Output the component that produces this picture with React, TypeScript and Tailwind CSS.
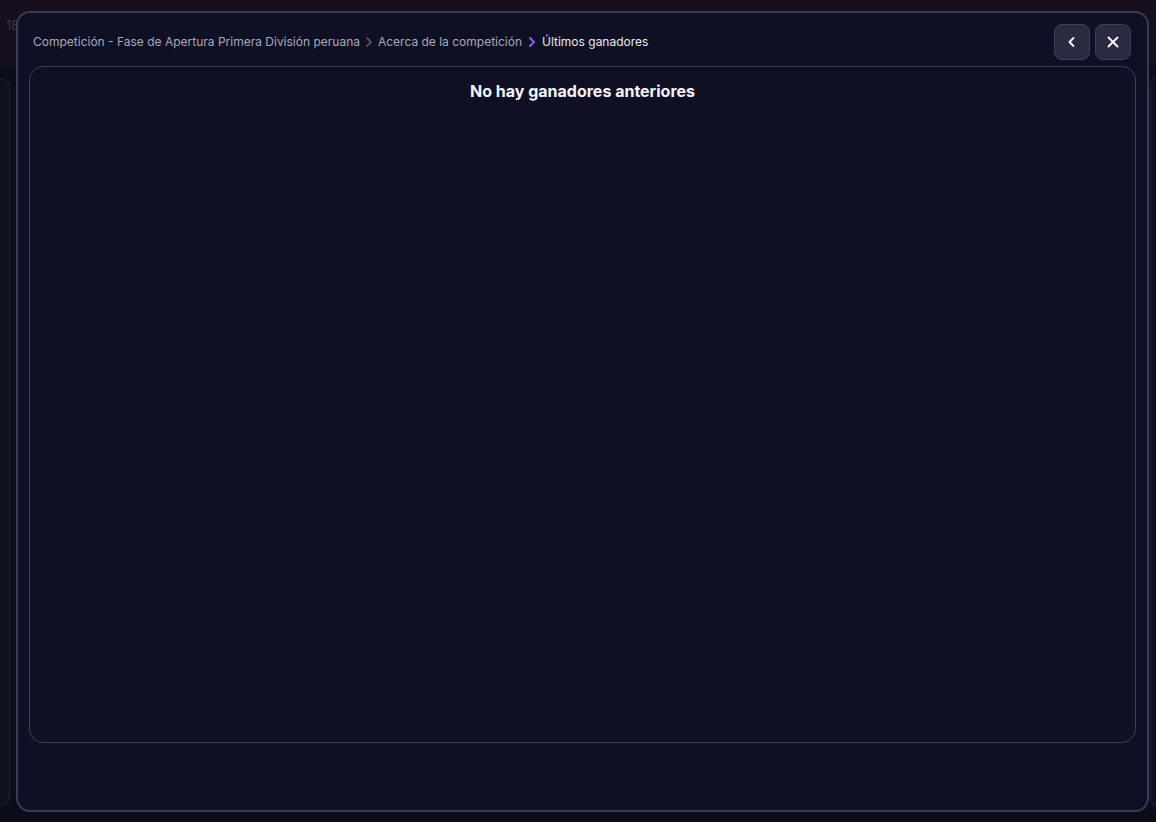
import React from "react";

export default function App() {
  return (
    <div
      className="relative w-[1156px] h-[822px] overflow-hidden bg-[#0b0e1a]"
      style={{ fontFamily: "Inter, 'Noto Sans', sans-serif" }}
    >
      {/* dimmed page behind */}
      <div className="flex flex-col w-full h-full">
        <div className="h-[66px] bg-[#170f1d] flex items-center pl-[6px] text-[13px] text-[#3a3548]">
          <span className="mt-[-14px]">18</span>
        </div>
        <div className="flex flex-1 gap-[8px] pt-[12px] pb-[16px]">
          <div className="w-[10px] rounded-r-[10px] border border-l-0 border-[#1f2233] bg-[#0d1020]" />
          <div className="flex-1" />
          <div className="w-[6px] rounded-l-[6px] border border-r-0 border-[#1f2233] bg-[#0d1020]" />
        </div>
      </div>

      {/* modal */}
      <div className="absolute left-[16px] top-[11px] w-[1133px] h-[801px] rounded-[14px] border-2 border-[#3a3b52] bg-[#0f1024] flex flex-col px-[11px] pt-[11px]">
        <div className="flex items-center justify-between h-[36px]">
          <div className="flex items-center text-[12px] pl-[4px] mt-[-1px]">
            <span className="text-[#a8a9b8]">Competición - Fase de Apertura Primera División peruana</span>
            <svg className="mx-[4px]" width="10" height="12" viewBox="0 0 10 12" fill="none">
              <path d="M3 2l4 4-4 4" stroke="#6b6c80" strokeWidth="1.4" strokeLinecap="round" strokeLinejoin="round" />
            </svg>
            <span className="text-[#a8a9b8]">Acerca de la competición</span>
            <svg className="mx-[4px]" width="12" height="12" viewBox="0 0 12 12" fill="none">
              <path d="M4 2l4 4-4 4" stroke="#8b5cf6" strokeWidth="2" strokeLinecap="round" strokeLinejoin="round" />
            </svg>
            <span className="text-[#e8e8f0]">Últimos ganadores</span>
          </div>
          <div className="flex items-center gap-[5px] mr-[5px]">
            <button className="w-[36px] h-[36px] rounded-[8px] bg-[#2a2b40] border border-[#3e3f56] flex items-center justify-center">
              <svg width="14" height="14" viewBox="0 0 14 14" fill="none">
                <path d="M8.5 3l-4 4 4 4" stroke="#ffffff" strokeWidth="1.8" strokeLinecap="round" strokeLinejoin="round" />
              </svg>
            </button>
            <button className="w-[36px] h-[36px] rounded-[8px] bg-[#2a2b40] border border-[#3e3f56] flex items-center justify-center">
              <svg width="14" height="14" viewBox="0 0 14 14" fill="none">
                <path d="M2.5 2.5l9 9M11.5 2.5l-9 9" stroke="#ffffff" strokeWidth="1.8" strokeLinecap="round" />
              </svg>
            </button>
          </div>
        </div>
        <div className="mt-[6px] h-[677px] rounded-[14px] border border-[#3c3d55] flex justify-center pt-[12px]">
          <div className="text-[16px] font-bold text-[#f4f4f8]">No hay ganadores anteriores</div>
        </div>
      </div>
    </div>
  );
}
